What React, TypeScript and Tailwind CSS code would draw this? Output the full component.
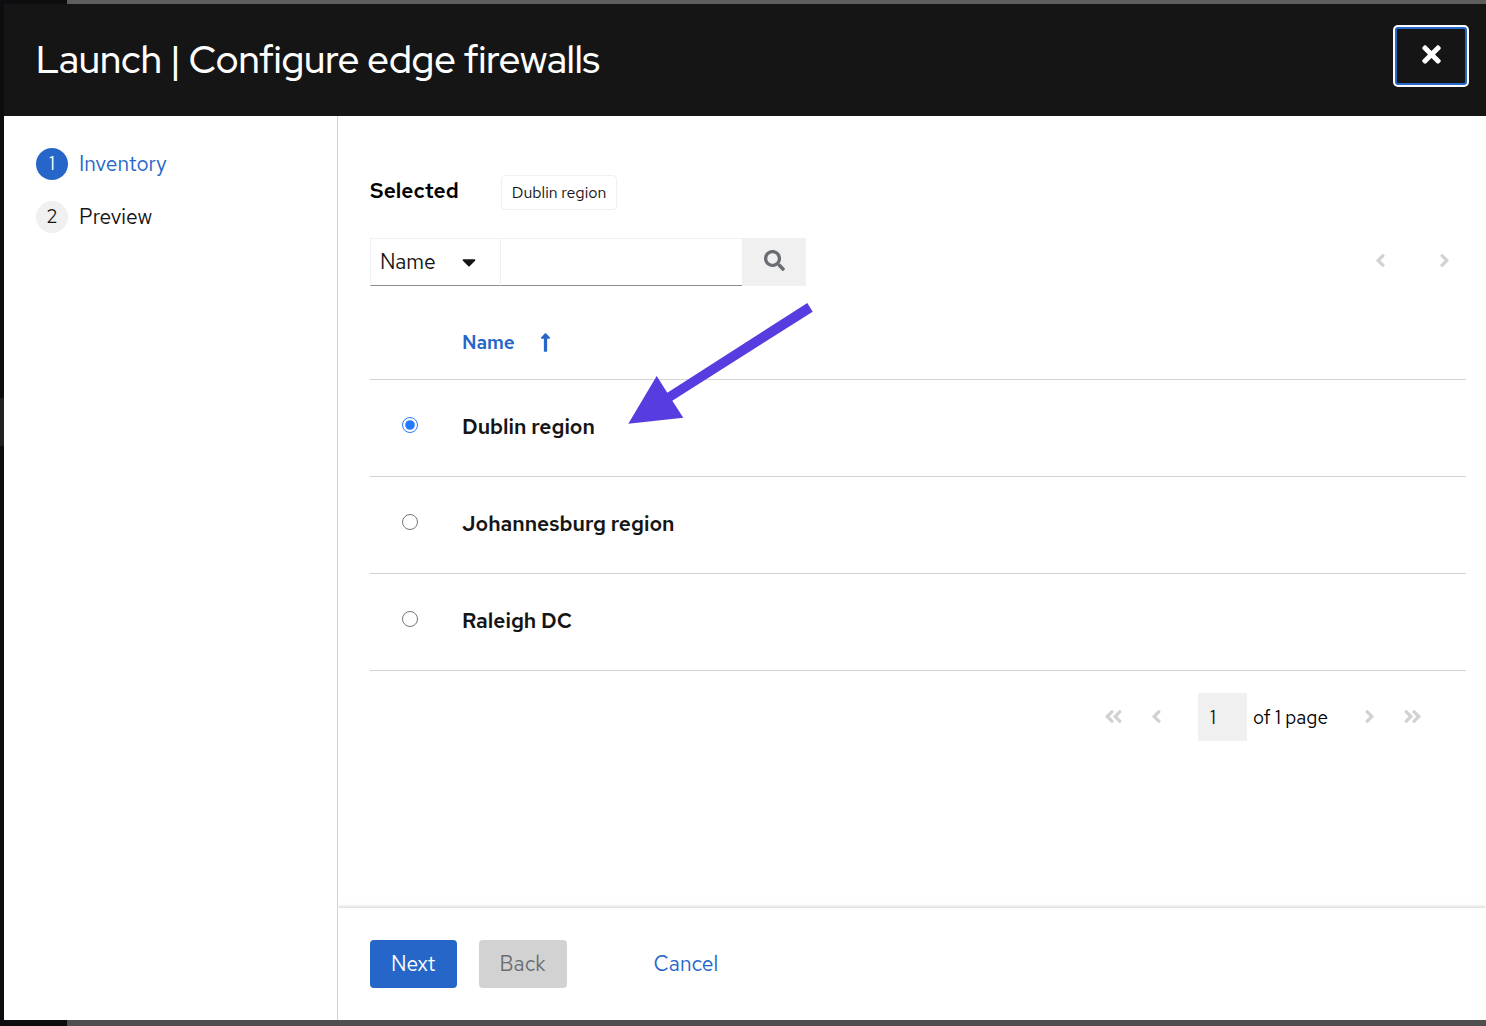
import { useState } from "react";
import {
  FaAngleDoubleLeft,
  FaAngleDoubleRight,
  FaAngleLeft,
  FaAngleRight,
  FaCaretDown,
  FaLongArrowAltUp,
  FaSearch,
  FaTimes,
} from "react-icons/fa";

const inventories = ["Dublin region", "Johannesburg region", "Raleigh DC"];

const steps = ["Inventory", "Preview"];

function Header() {
  return (
    <header className="flex h-28 shrink-0 items-start justify-between bg-[#151515] pl-8 pr-[18px] pt-[22px] text-white">
      <h1 className="pt-2 font-['Red_Hat_Display','Red_Hat_Text','Inter',sans-serif] text-[38px] font-medium leading-[52px]">
        Launch | Configure edge firewalls
      </h1>
      <button
        type="button"
        aria-label="Close"
        className="flex h-[60px] w-[74px] items-center justify-center rounded-[4px] border-[3px] border-[#2566c8] pb-1 text-[27px] outline-2 -outline-offset-1 outline-white"
      >
        <FaTimes />
      </button>
    </header>
  );
}

function Steps() {
  return (
    <nav aria-label="Steps" className="w-[334px] shrink-0 border-r border-[#d2d2d2] px-8 pt-8">
      <ol className="flex flex-col gap-[21px]">
        {steps.map((step, i) => (
          <li key={step}>
            <button
              type="button"
              className={`flex h-8 items-center gap-[11px] text-[21px] ${i === 0 ? "text-[#2566c8]" : "text-[#151515]"}`}
            >
              <span
                className={`flex size-8 items-center justify-center rounded-full text-[19px] ${
                  i === 0 ? "bg-[#2566c8] text-white" : "bg-[#f0f0f0] text-[#151515]"
                }`}
              >
                {i + 1}
              </span>
              {step}
            </button>
          </li>
        ))}
      </ol>
    </nav>
  );
}

function Toolbar() {
  return (
    <div className="mt-[27px] flex h-12 items-center justify-between">
      <div className="flex h-12">
        <div className="relative">
          <select
            aria-label="Filter by"
            className="h-12 w-[130px] appearance-none border-b border-l border-t border-[#f0f0f0] border-b-[#8a8d90] bg-white pl-[9px] text-[21px] text-[#151515]"
          >
            <option>Name</option>
          </select>
          <FaCaretDown className="pointer-events-none absolute right-5 top-[13px] text-[22px] text-[#151515]" />
        </div>
        <input
          type="text"
          aria-label="Search text"
          className="h-12 w-[242px] border-b border-l border-t border-[#f0f0f0] border-b-[#8a8d90] px-2 text-[21px]"
        />
        <button
          type="button"
          aria-label="Search"
          className="flex h-12 w-16 items-center justify-center bg-[#f0f0f0] pb-[2px] text-[21px] text-[#6a6e73]"
        >
          <FaSearch />
        </button>
      </div>
      <div className="flex pb-[2px] text-[21px] text-[#d2d2d2]">
        <button type="button" disabled aria-label="Previous page" className="flex w-16 justify-center">
          <FaAngleLeft />
        </button>
        <button type="button" disabled aria-label="Next page" className="-mr-[10px] flex w-16 justify-center">
          <FaAngleRight />
        </button>
      </div>
    </div>
  );
}

function InventoryTable({ selected, onSelect }: { selected: string; onSelect: (name: string) => void }) {
  return (
    <table className="mt-[22px] w-full">
      <thead>
        <tr className="h-[72px] border-b border-[#d2d2d2]">
          <td className="w-[92px]" />
          <th className="text-left" aria-sort="ascending">
            <button type="button" className="flex items-center gap-5 text-[19px] font-semibold text-[#2566c8]">
              Name
              <FaLongArrowAltUp className="mb-[2px] text-[21px]" />
            </button>
          </th>
        </tr>
      </thead>
      <tbody>
        {inventories.map((name, i) => (
          <tr key={name} className="h-[97px] border-b border-[#d2d2d2]">
            <td className="pb-[6px] pl-8">
              <input
                id={`inventory-${i}`}
                type="radio"
                name="inventory"
                checked={selected === name}
                onChange={() => onSelect(name)}
                className="block size-4 accent-[#2678ff]"
              />
            </td>
            <td className="pb-[2px]">
              <label htmlFor={`inventory-${i}`} className="text-[21px] font-semibold text-[#151515]">
                {name}
              </label>
            </td>
          </tr>
        ))}
      </tbody>
    </table>
  );
}

function Pagination() {
  const button = "flex h-12 w-[43px] items-center justify-center pb-[2px] text-[21px] text-[#d2d2d2]";
  return (
    <div className="mt-[22px] flex items-center justify-end pr-8">
      <button type="button" disabled aria-label="First page" className={button}>
        <FaAngleDoubleLeft />
      </button>
      <button type="button" disabled aria-label="Previous page" className={button}>
        <FaAngleLeft />
      </button>
      <input
        type="text"
        aria-label="Current page"
        defaultValue="1"
        disabled
        className="ml-5 h-12 w-[49px] bg-[#f0f0f0] pl-3 text-[19px] text-[#151515]"
      />
      <span className="ml-[6px] mr-5 pt-[2px] text-[19px] text-black">of 1 page</span>
      <button type="button" disabled aria-label="Next page" className={button}>
        <FaAngleRight />
      </button>
      <button type="button" disabled aria-label="Last page" className={button}>
        <FaAngleDoubleRight />
      </button>
    </div>
  );
}

export default function App() {
  const [selected, setSelected] = useState("Dublin region");
  return (
    <div className="flex min-h-screen flex-col bg-[linear-gradient(#20221f,#20221f),linear-gradient(to_right,#0d0d0f_67px,transparent_67px),linear-gradient(#5e5e5e,#4f4f4f)] bg-[size:4px_48px,100%_100%,100%_100%] bg-[position:0_398px,0_0,0_0] bg-no-repeat pb-[6px] pl-1 pt-1 font-['Red_Hat_Text','Inter',sans-serif]">
      <div role="dialog" aria-label="Launch" className="flex grow flex-col bg-white">
        <Header />
        <div className="flex grow">
          <Steps />
          <div className="flex min-w-0 grow flex-col">
            <main className="relative grow pl-8 pr-5 pt-[59px]">
              <div className="flex items-center gap-[42px]">
                <span className="pb-1 text-[21px] font-semibold text-black">Selected</span>
                <span className="flex h-[35px] items-center rounded-[4px] border border-[#f0f0f0] px-[10px] text-[16px] text-[#151515]">
                  {selected}
                </span>
              </div>
              <Toolbar />
              <InventoryTable selected={selected} onSelect={setSelected} />
              <Pagination />
              <svg
                aria-hidden="true"
                viewBox="0 0 186 122"
                className="pointer-events-none absolute left-[290px] top-[186px] h-[122px] w-[186px]"
              >
                <path
                  d="M0.3 121.7 28.7 74 39.3 90.7 179.3 1 184.7 9.7 44.3 98.7 55.3 115.7Z"
                  fill="#573de0"
                />
              </svg>
            </main>
            <footer className="flex h-28 items-center bg-white pl-8 text-[21px] shadow-[0_-1px_4px_rgba(3,3,3,0.2)] [clip-path:inset(-8px_0_0_0)]">
              <button type="button" className="h-12 rounded-[4px] bg-[#2566c8] px-[21px] text-white">
                Next
              </button>
              <button type="button" disabled className="ml-[22px] h-12 rounded-[4px] bg-[#d2d2d2] px-[21px] text-[#6a6e73]">
                Back
              </button>
              <button type="button" className="ml-[66px] h-12 px-[21px] text-[#2566c8]">
                Cancel
              </button>
            </footer>
          </div>
        </div>
      </div>
    </div>
  );
}
